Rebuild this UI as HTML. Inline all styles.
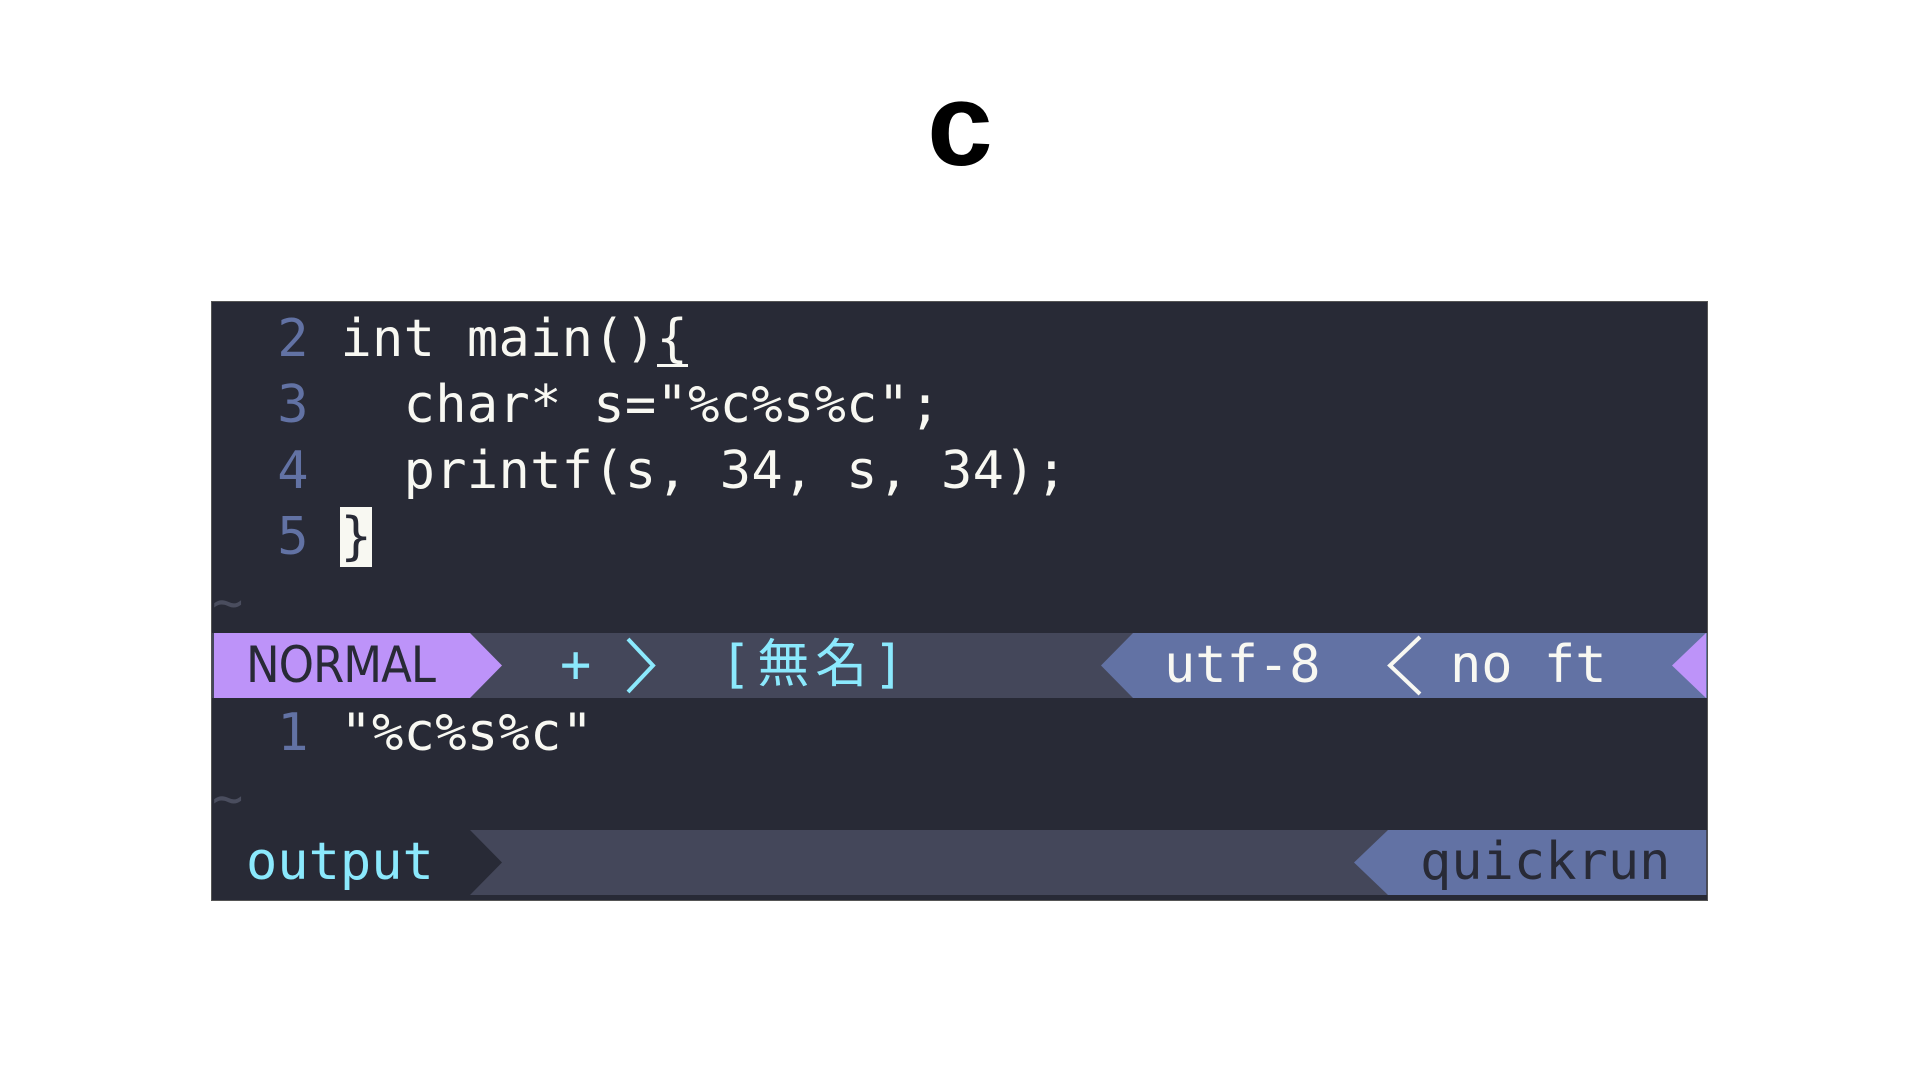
<!DOCTYPE html>
<html><head><meta charset="utf-8"><style>
html,body{margin:0;padding:0;background:#fff;width:1920px;height:1080px;overflow:hidden}
.t{position:absolute;left:0;width:1920px;top:50px;text-align:center;font:bold 118px "Liberation Sans",sans-serif;color:#000;line-height:150px}
#box{position:absolute;left:211px;top:301px;width:1497px;height:600px;background:#282a36;border:1px solid #555;box-sizing:border-box;overflow:hidden}
.r{position:absolute;left:2px;height:66px;line-height:66px;font:52px "DejaVu Sans Mono","Noto Sans CJK JP",monospace;color:#f8f8f2;white-space:pre;letter-spacing:0.3px}
.n{color:#6272a4}
.tl{color:#4a4d5e}
.cur{background:#f8f8f2;color:#282a36}
.u{display:inline-block;line-height:50px;border-bottom:3px solid #f8f8f2}
.bar{position:absolute;left:0;width:1497px;height:65px}
.bar div,.bar span{position:absolute}
.txt{font:52px "DejaVu Sans Mono","Noto Sans CJK JP",monospace;line-height:65px;white-space:pre;top:0}
</style></head><body>
<div class="t">c</div>
<div id="box">
<div class="r" style="top:7px"><span class="n">  2 </span>int main()<span class="u">{</span></div>
<div class="r" style="top:73px"><span class="n">  3 </span>  char* s="%c%s%c";</div>
<div class="r" style="top:139px"><span class="n">  4 </span>  printf(s, 34, s, 34);</div>
<div class="r" style="top:205px"><span class="n">  5 </span><span class="cur">}</span></div>
<div class="r tl" style="top:271px;left:0">~</div>

<div class="bar" style="top:331px;background:#44475a">
 <svg style="position:absolute;left:0;top:0" width="1497" height="65">
  <polygon points="2,0 258,0 290,32.5 258,65 2,65" fill="#bd93f9"/>
  <polyline points="416,6 441,32.5 416,59" fill="none" stroke="#8be9fd" stroke-width="4"/>
  <polygon points="921,0 1497,0 1497,65 921,65 889,32.5" fill="#6272a4"/>
  <polyline points="1208,4 1178,32.5 1208,61" fill="none" stroke="#f8f8f2" stroke-width="4"/>
  <polygon points="1494,0 1460,32.5 1494,65" fill="#bd93f9"/>
 </svg>
 <span class="txt" style="left:34px;color:#282a36;font-family:'DejaVu Sans Condensed','DejaVu Sans',sans-serif;font-size:50px;letter-spacing:-1px">NORMAL</span>
 <span class="txt" style="left:348px;color:#8be9fd">+</span>
 <span class="txt" style="left:508px;color:#8be9fd;letter-spacing:6px">[無名]</span>
 <span class="txt" style="left:952px;color:#f8f8f2">utf-8</span>
 <span class="txt" style="left:1238px;color:#f8f8f2">no ft</span>
</div>

<div class="r" style="top:401px"><span class="n">  1 </span>"%c%s%c"</div>
<div class="r tl" style="top:467px;left:0">~</div>

<div class="bar" style="top:528px;background:#282a36">
 <svg style="position:absolute;left:0;top:0" width="1497" height="65">
  <polygon points="258,0 1497,0 1497,65 258,65 290,32.5" fill="#44475a"/>
  <polygon points="1176,0 1494,0 1494,65 1176,65 1142,32.5" fill="#6272a4"/>
 </svg>
 <span class="txt" style="left:34px;color:#8be9fd">output</span>
 <span class="txt" style="left:1208px;color:#282a36">quickrun</span>
</div>
</div>
</body></html>
